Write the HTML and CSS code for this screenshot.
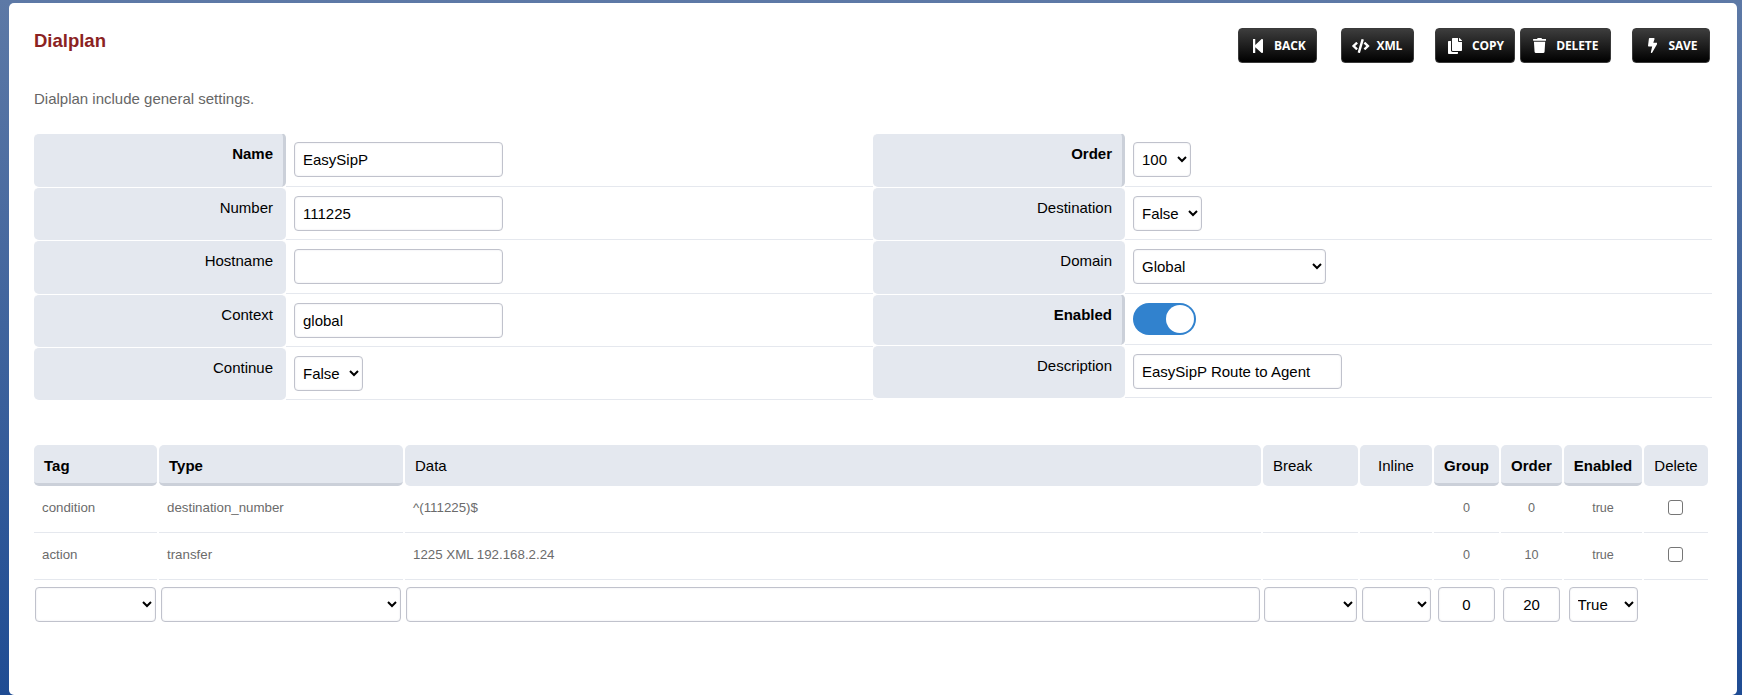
FILE: index.html
```html
<!DOCTYPE html>
<html lang="en">
<head>
<meta charset="utf-8">
<title>Dialplan</title>
<link rel="stylesheet" href="styles.css">
</head>
<body>
<main class="panel">
  <header class="head">
    <h1 class="title">Dialplan</h1>
    <div class="actions">
      <button class="btn btn-back" type="button"><svg class="ico" viewBox="0 0 448 512"><path d="M64 468V44c0-6.6 5.4-12 12-12h48c6.6 0 12 5.4 12 12v176.4l195.5-181C352.1 22.3 384 36.6 384 64v384c0 27.4-31.9 41.7-52.5 24.6L136 292.7V468c0 6.6-5.4 12-12 12H76c-6.6 0-12-5.4-12-12z"/></svg>BACK</button>
      <button class="btn btn-xml" type="button"><svg class="ico" viewBox="0 0 640 512"><path d="M278.9 511.5l-61-17.7c-6.4-1.8-10-8.5-8.2-14.9L346.2 8.7c1.8-6.4 8.5-10.1 14.9-8.2l61 17.7c6.4 1.8 10 8.5 8.2 14.9L293.8 503.3c-1.9 6.4-8.5 10.1-14.9 8.2zm-114-112.2l43.5-46.4c4.6-4.9 4.3-12.7-.8-17.2L117 256l90.6-79.7c5.1-4.5 5.5-12.3.8-17.2l-43.5-46.4c-4.5-4.8-12.1-5.1-17-.5L3.8 247.2c-5.1 4.7-5.1 12.8 0 17.5l144.1 135.1c4.9 4.6 12.5 4.4 17-.5zm327.2.6l144.1-135.1c5.1-4.7 5.1-12.8 0-17.5L492.1 112.1c-4.8-4.5-12.4-4.3-17 .5L431.6 159c-4.6 4.9-4.3 12.7.8 17.2L523 256l-90.6 79.7c-5.1 4.5-5.5 12.3-.8 17.2l43.5 46.4c4.5 4.9 12.1 5.1 17 .6z"/></svg>XML</button>
      <button class="btn btn-copy" type="button"><svg class="ico" viewBox="0 0 448 512"><path d="M320 448v40c0 13.255-10.745 24-24 24H24c-13.255 0-24-10.745-24-24V120c0-13.255 10.745-24 24-24h72v296c0 30.879 25.121 56 56 56h168zm0-344V0H152c-13.255 0-24 10.745-24 24v368c0 13.255 10.745 24 24 24h272c13.255 0 24-10.745 24-24V128H344c-13.2 0-24-10.8-24-24zm120.971-31.029L375.029 7.029A24 24 0 0 0 358.059 0H352v96h96v-6.059a24 24 0 0 0-7.029-16.97z"/></svg>COPY</button>
      <button class="btn btn-delete" type="button"><svg class="ico" viewBox="0 0 448 512"><path d="M432 32H312l-9.4-18.7A24 24 0 0 0 281.1 0H166.8a23.72 23.72 0 0 0-21.4 13.3L136 32H16A16 16 0 0 0 0 48v32a16 16 0 0 0 16 16h416a16 16 0 0 0 16-16V48a16 16 0 0 0-16-16zM53.2 467a48 48 0 0 0 47.9 45h245.8a48 48 0 0 0 47.9-45L416 128H32z"/></svg>DELETE</button>
      <button class="btn btn-save" type="button"><svg class="ico" viewBox="0 0 320 512"><path d="M296 160H180.6l42.6-129.8C227.2 15 215.7 0 200 0H56C44 0 33.8 8.9 32.2 20.8l-32 240C-1.7 275.2 9.5 288 24 288h118.7L96.6 482.5c-3.6 15.2 8 29.5 23.3 29.5 8.4 0 16.4-4.4 20.8-12l176-304c9.3-15.9-2.2-36-20.7-36z"/></svg>SAVE</button>
    </div>
  </header>

  <p class="intro">Dialplan include general settings.</p>

  <section class="form-cols">
    <table class="form-table">
      <tr><th class="lbl req">Name</th><td class="val"><input class="ctl w-text" type="text" value="EasySipP"></td></tr>
      <tr><th class="lbl">Number</th><td class="val"><input class="ctl w-text" type="text" value="111225"></td></tr>
      <tr><th class="lbl">Hostname</th><td class="val"><input class="ctl w-text" type="text" value=""></td></tr>
      <tr><th class="lbl">Context</th><td class="val"><input class="ctl w-text" type="text" value="global"></td></tr>
      <tr><th class="lbl">Continue</th><td class="val"><select class="ctl w-bool"><option>False</option></select></td></tr>
    </table>
    <table class="form-table">
      <tr><th class="lbl req">Order</th><td class="val"><select class="ctl w-order"><option>100</option></select></td></tr>
      <tr><th class="lbl">Destination</th><td class="val"><select class="ctl w-bool"><option>False</option></select></td></tr>
      <tr><th class="lbl">Domain</th><td class="val"><select class="ctl w-domain"><option>Global</option></select></td></tr>
      <tr class="row-toggle"><th class="lbl req">Enabled</th><td class="val"><span class="toggle"><span class="knob"></span></span></td></tr>
      <tr><th class="lbl">Description</th><td class="val"><input class="ctl w-text" type="text" value="EasySipP Route to Agent"></td></tr>
    </table>
  </section>

  <table class="list">
    <thead>
      <tr>
        <th class="c-tag sort">Tag</th>
        <th class="c-type sort">Type</th>
        <th class="c-data">Data</th>
        <th class="c-break">Break</th>
        <th class="c-inline mid">Inline</th>
        <th class="c-group mid sort">Group</th>
        <th class="c-order mid sort">Order</th>
        <th class="c-enabled mid sort">Enabled</th>
        <th class="c-delete mid">Delete</th>
      </tr>
    </thead>
    <tbody>
      <tr>
        <td>condition</td><td>destination_number</td><td>^(111225)$</td><td></td><td></td>
        <td class="mid small">0</td><td class="mid small">0</td><td class="mid small">true</td>
        <td class="mid"><input class="check" type="checkbox"></td>
      </tr>
      <tr>
        <td>action</td><td>transfer</td><td>1225 XML 192.168.2.24</td><td></td><td></td>
        <td class="mid small">0</td><td class="mid small">10</td><td class="mid small">true</td>
        <td class="mid"><input class="check" type="checkbox"></td>
      </tr>
      <tr class="add-row">
        <td><select class="ctl fill"><option></option></select></td>
        <td class="inset"><select class="ctl fill"><option></option></select></td>
        <td><input class="ctl fill" type="text" value=""></td>
        <td><select class="ctl fill"><option></option></select></td>
        <td class="inset-left"><select class="ctl fill"><option></option></select></td>
        <td class="mid"><input class="ctl w-num" type="text" value="0"></td>
        <td class="mid"><input class="ctl w-num" type="text" value="20"></td>
        <td class="mid"><select class="ctl w-true"><option>True</option></select></td>
        <td></td>
      </tr>
    </tbody>
  </table>
</main>
</body>
</html>
```
FILE: styles.css
```css
* { box-sizing: border-box; }

html, body { height: 100%; }

body {
  margin: 0;
  padding: 3px 5px 0 9px;
  overflow: hidden;
  background: linear-gradient(180deg, #5d79a6 0%, #1f4c93 100%);
  font-family: "Liberation Sans", Arial, sans-serif;
  font-size: 15px;
  color: #000;
}

.panel {
  height: 100%;
  background: #fff;
  border-radius: 5px;
  padding: 25px 27px 0 25px;
}

.head {
  display: flex;
  justify-content: space-between;
  align-items: flex-start;
  height: 35px;
}

.title {
  margin: 2px 0 0;
  font-size: 18.5px;
  line-height: 22px;
  font-weight: 700;
  color: #8b2222;
}

.actions { display: flex; }

.btn {
  display: flex;
  align-items: center;
  height: 35px;
  padding: 0;
  border: 1px solid #3a3a3a;
  border-radius: 4px;
  background: linear-gradient(180deg, #3d3d3d 0%, #000 100%);
  color: #fff;
  font-family: "Open Sans", sans-serif;
  font-size: 12px;
  font-weight: 700;
  letter-spacing: -0.1px;
}

.ico { height: 15px; width: auto; fill: #fff; display: block; flex: none; }

.btn-back { width: 79px; padding-left: 12px; }
.btn-back .ico { height: 16px; margin-right: 9px; }
.btn-xml { width: 73px; margin-left: 24px; padding-left: 10px; }
.btn-xml .ico { height: 14px; margin-right: 7px; }
.btn-copy { width: 80px; margin-left: 21px; padding-left: 12px; }
.btn-copy .ico { height: 16px; margin-right: 10px; }
.btn-delete { width: 91px; margin-left: 5px; padding-left: 12px; }
.btn-delete .ico { margin-right: 10px; }
.btn-save { width: 78px; margin-left: 21px; padding-left: 15px; }
.btn-save .ico { margin-right: 11px; }

.intro {
  margin: 26px 0 24px;
  font-size: 15px;
  line-height: 20px;
  color: #666;
}

.form-cols { display: flex; align-items: flex-start; }

.form-table {
  width: 839px;
  flex: none;
  border-collapse: separate;
  border-spacing: 0;
  table-layout: fixed;
}

.form-table tr { height: 53px; }
.form-table tr:nth-child(1), .form-table tr:nth-child(3) { height: 54px; }
.form-table .row-toggle { height: 51px; }

.lbl {
  width: 252px;
  padding: 10px 13px 0 0;
  vertical-align: top;
  text-align: right;
  font-weight: 400;
  line-height: 20px;
  background: #e4e8ef;
  border-top: 1px solid #fff;
  border-radius: 5px;
}

.lbl.req {
  font-weight: 700;
  border-right: 3px solid #cbd0d9;
  padding-right: 10px;
}

.val {
  padding: 9px 0 0 8px;
  vertical-align: top;
  border-bottom: 1px solid #e5e8ee;
}

.ctl {
  height: 35px;
  padding: 0 8px;
  border: 1px solid #c0c2cc;
  border-radius: 4px;
  background: #fff;
  box-shadow: inset 0 0 2px #e2e4ea;
  font-family: "Liberation Sans", Arial, sans-serif;
  font-size: 15px;
  color: #000;
  display: block;
}

select.ctl { padding: 0 4px; }

.w-text { width: 209px; }
.w-bool { width: 69px; }
.w-order { width: 58px; }
.w-domain { width: 193px; }
.w-num { width: 57px; margin: 0 auto; text-align: center; }
.w-true { width: 69px; margin: 0 auto; }
.fill { width: 100%; }

.toggle {
  display: block;
  position: relative;
  width: 63px;
  height: 32px;
  border-radius: 16px;
  background: #3182ce;
}

.knob {
  position: absolute;
  top: 2px;
  right: 2px;
  width: 28px;
  height: 28px;
  border-radius: 50%;
  background: #fff;
}

.list {
  width: 1678px;
  margin: 45px 0 0 -2px;
  border-collapse: separate;
  border-spacing: 2px 0;
  table-layout: fixed;
}

.list th {
  height: 41px;
  padding: 0 10px;
  text-align: left;
  font-weight: 400;
  background: #e4e8ef;
  border-radius: 5px;
}

.list th.sort {
  padding-top: 3px;
  font-weight: 700;
  border-bottom: 3px solid #cbd0d9;
}

.list th.mid, .list .mid { text-align: center; }
.list th.mid { padding-left: 0; padding-right: 0; }

.c-tag { width: 123px; }
.c-type { width: 244px; }
.c-data { width: 856px; }
.c-break { width: 95px; }
.c-inline { width: 72px; }
.c-group { width: 65px; }
.c-order { width: 61px; }
.c-enabled { width: 78px; }
.c-delete { width: 64px; }

.list td {
  height: 47px;
  padding: 0 8px 3px;
  font-size: 13.3px;
  color: #6b6b6b;
  border-bottom: 1px solid #e5e8ee;
}

.list td.small { font-size: 12.6px; padding-left: 0; padding-right: 0; }

.list .add-row td {
  height: auto;
  padding: 7px 1px 0;
  border-bottom: 0;
  vertical-align: top;
}

.list .add-row .inset { padding-left: 2px; padding-right: 2px; }
.list .add-row .inset-left { padding-left: 2px; }

.check {
  appearance: none;
  display: block;
  width: 15px;
  height: 15px;
  margin: 0 auto 0 16px;
  border: 1.5px solid #767676;
  border-radius: 3px;
  background: #fff;
}
```
